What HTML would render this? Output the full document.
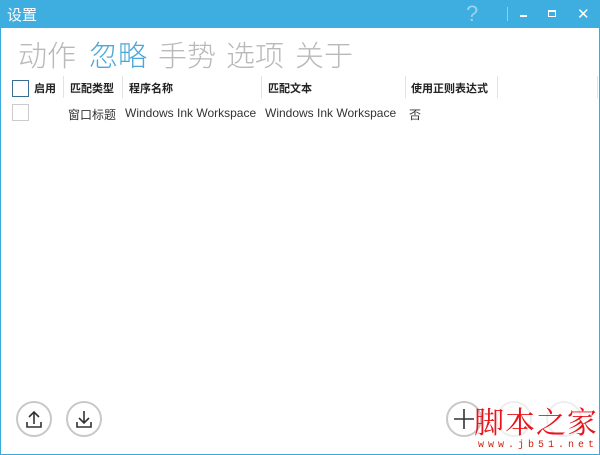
<!DOCTYPE html>
<html><head><meta charset="utf-8"><style>
*{margin:0;padding:0;box-sizing:border-box}
body{width:600px;height:455px;overflow:hidden;background:#fff;font-family:"Liberation Sans","Noto Sans CJK SC",sans-serif;position:relative}
.win{position:absolute;left:0;top:0;width:600px;height:455px;border:1px solid #3aa9dc;border-top:none}
.tb{position:absolute;left:0;top:0;width:600px;height:28px;background:#3eaee1;color:#fff}
.tb .t{position:absolute;left:7px;top:4px;font-size:15px}
.abs{position:absolute}
.tab{position:absolute;top:33px;font-size:29px;color:#b9b9b9;font-family:"Noto Sans CJK SC",sans-serif;font-weight:300}
.h{position:absolute;top:80px;font-size:11px;color:#222;font-weight:bold;font-family:"Noto Sans CJK SC",sans-serif}
.d{position:absolute;top:106px;font-size:12px;color:#333;font-family:"Liberation Sans","Noto Sans CJK SC",sans-serif}
.sep{position:absolute;top:76px;width:1px;height:22px;background:#e3e3e3}
.c{position:absolute;width:36px;height:36px;border:2px solid #c8c8c8;border-radius:50%;top:401px}
</style></head><body>
<div class="win"></div>
<div class="tb"><span class="t">设置</span>
<span class="abs" style="left:466px;top:1px;font-size:22px;color:#9ad2ee">?</span>
<div class="abs" style="left:507px;top:7px;width:1px;height:14px;background:#8fcdea"></div>
<div class="abs" style="left:520px;top:15px;width:7px;height:2px;background:#fff"></div>
<div class="abs" style="left:548px;top:10px;width:8px;height:7px;border:1px solid #fff;border-top-width:2px"></div>
<span class="abs" style="left:577px;top:5px;font-size:15px;color:#fff">✕</span>
</div>
<span class="tab" style="left:18px">动作</span>
<span class="tab" style="left:89px;color:#4ba8d8">忽略</span>
<span class="tab" style="left:158px">手势</span>
<span class="tab" style="left:226px">选项</span>
<span class="tab" style="left:295px">关于</span>
<div class="abs" style="left:12px;top:80px;width:17px;height:17px;border:1.5px solid #3a6f92"></div>
<span class="h" style="left:34px">启用</span>
<div class="sep" style="left:63px"></div>
<span class="h" style="left:70px">匹配类型</span>
<div class="sep" style="left:122px"></div>
<span class="h" style="left:129px">程序名称</span>
<div class="sep" style="left:261px"></div>
<span class="h" style="left:268px">匹配文本</span>
<div class="sep" style="left:405px"></div>
<span class="h" style="left:411px">使用正则表达式</span>
<div class="sep" style="left:497px"></div>
<div class="sep" style="left:597px"></div>
<div class="abs" style="left:12px;top:104px;width:17px;height:17px;border:1px solid #ccc"></div>
<span class="d" style="left:68px">窗口标题</span>
<span class="d" style="left:125px">Windows Ink Workspace</span>
<span class="d" style="left:265px">Windows Ink Workspace</span>
<span class="d" style="left:409px">否</span>
<div class="c" style="left:16px"><svg width="32" height="32" viewBox="0 0 32 32" fill="none" stroke="#333" stroke-width="1.6"><path d="M16 21V9M11 14l5-5 5 5M9 19v5h14v-5"/></svg></div>
<div class="c" style="left:66px"><svg width="32" height="32" viewBox="0 0 32 32" fill="none" stroke="#333" stroke-width="1.6"><path d="M16 8v12M11 15l5 5 5-5M9 19v5h14v-5"/></svg></div>
<div class="c" style="left:446px"><svg width="32" height="32" viewBox="0 0 32 32" fill="none" stroke="#333" stroke-width="1.6"><path d="M16 6v20M6 16h20"/></svg></div>
<div class="c" style="left:496px;border-color:#eee"></div>
<div class="c" style="left:546px;border-color:#eee"></div>
<span class="abs" style="left:474px;top:402px;font-size:30px;color:#e8141b;font-family:'Noto Serif CJK SC',serif;letter-spacing:1px;line-height:36px">脚本之家</span>
<span class="abs" style="left:478px;top:440px;font-size:10px;color:#c21;letter-spacing:4px;font-family:'Liberation Mono',monospace">www.jb51.net</span>
</body></html>
